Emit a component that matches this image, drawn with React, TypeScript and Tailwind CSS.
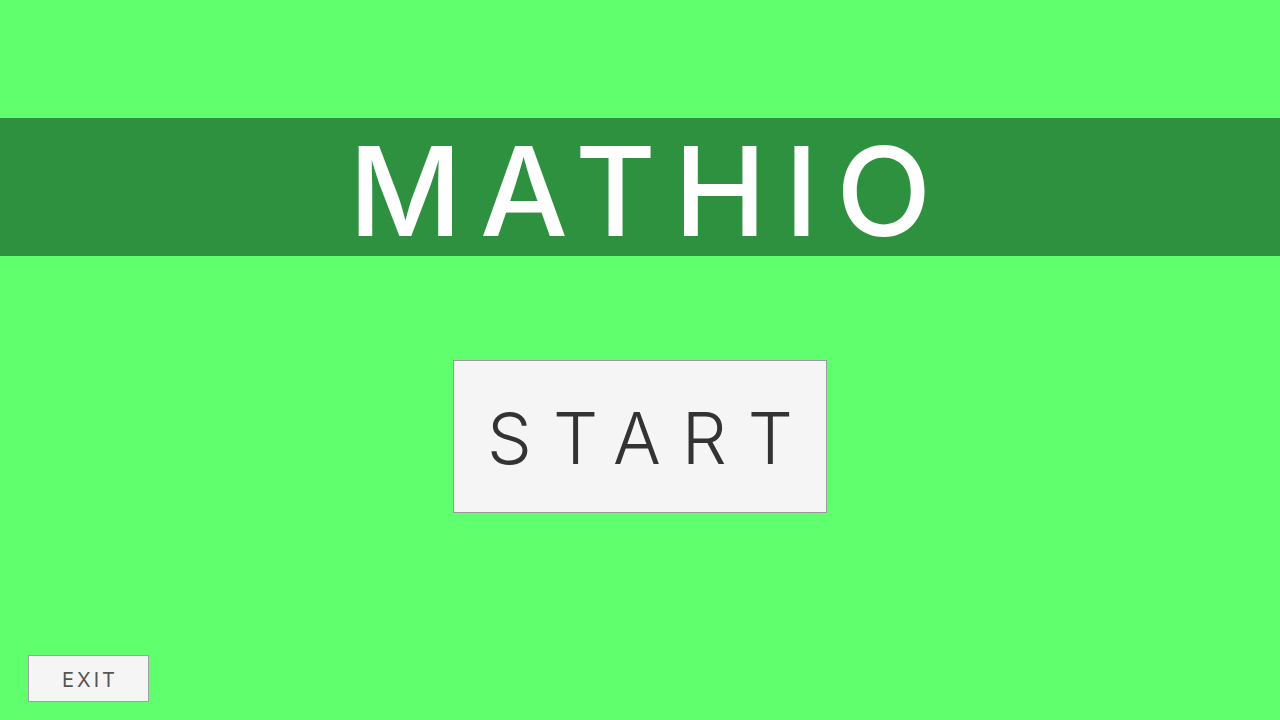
import React from 'react';

const App: React.FC = () => {
  return (
    <div className="flex h-screen w-full flex-col bg-[#5fff6e] font-['Inter',sans-serif]">
      <div className="mt-[118px] flex h-[138px] items-center justify-center bg-[#2e913f]">
        <h1 className="mt-[8px] pl-[18px] text-[124px] leading-none font-medium tracking-[18px] text-white">
          MATHIO
        </h1>
      </div>

      <button className="mt-[104px] flex h-[153px] w-[374px] items-center justify-center self-center border border-[#9a9a9a] bg-[#f5f5f5]">
        <span className="mt-[4px] pl-[21px] text-[71px] leading-none font-light tracking-[21px] text-[#333333]">
          START
        </span>
      </button>

      <button className="mt-auto mb-[18px] ml-[28px] flex h-[47px] w-[121px] items-center justify-center border border-[#a0a0a0] bg-[#f5f5f5]">
        <span className="mt-[2px] pl-[3px] text-[20px] leading-none tracking-[3px] text-[#555555]">
          EXIT
        </span>
      </button>
    </div>
  );
};

export default App;
